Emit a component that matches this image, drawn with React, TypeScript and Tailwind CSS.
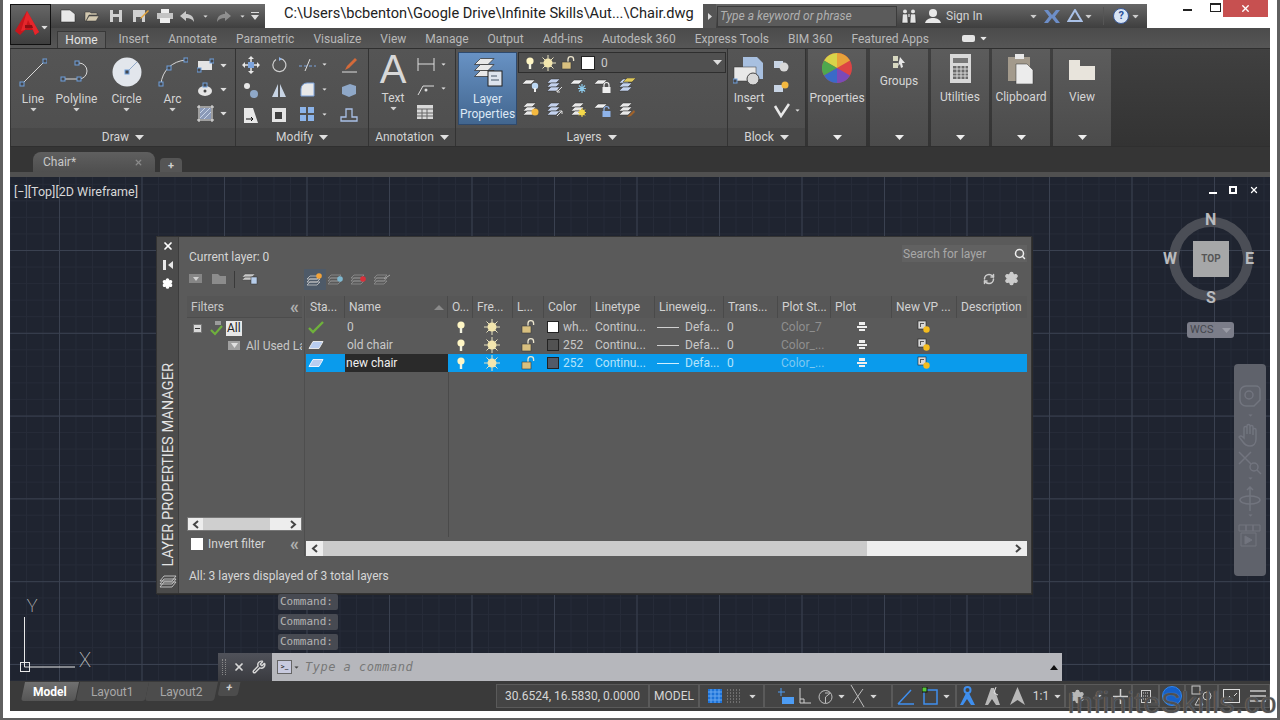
import type { ReactNode } from "react";
import { Search, Settings, RefreshCw, Wrench, X } from "lucide-react";

const rowGrid =
  "grid grid-cols-[39px_103px_25px_40px_31px_47px_64px_69px_54px_53px_61px_65px_70px]";

function Caret({ className = "" }: { className?: string }) {
  return (
    <svg width="9" height="5" viewBox="0 0 9 5" className={className}>
      <path d="M0 0h9L4.500 5z" fill="currentColor" />
    </svg>
  );
}

function Grip({ x, y }: { x: number; y: number }) {
  return <rect x={x - 2} y={y - 2} width="4" height="4" fill="#46484c" stroke="#6f9fdc" />;
}

function Ic({ w = 20, h = 20, children }: { w?: number; h?: number; children: ReactNode }) {
  return (
    <svg width={w} height={h} viewBox={`0 0 ${w} ${h}`} className="shrink-0">
      {children}
    </svg>
  );
}

function Chevron({ left }: { left?: boolean }) {
  return (
    <svg width="7" height="9" viewBox="0 0 7 9">
      <path d={left ? "M6 1L2 4.500 6 8" : "M1 1l4 3.500L1 8"} fill="none" stroke="#444444" strokeWidth="2" />
    </svg>
  );
}

const Sheet = ({ x = 0, y = 0, f = "#eee" }: { x?: number; y?: number; f?: string }) => (
  <path d={`M${x + 4} ${y}h9l-4 4H${x}z`} fill={f} stroke="#333" strokeWidth=".5" />
);

const Stack = ({ c = "#e8e8e8" }: { c?: string }) => (
  <>
    <Sheet x={1} y={1} f={c} />
    <Sheet x={1} y={5} f={c} />
    <Sheet x={1} y={9} f={c} />
  </>
);

const LockBadge = ({ c = "#eeeeee", open }: { c?: string; open?: boolean }) => (
  <>
    <path d={open ? "M10 9V7a2.500 2.500 0 0 1 5 0" : "M10 9V7a2.500 2.500 0 0 1 5 0v2"} fill="none" stroke={c} strokeWidth="1.200" />
    <rect x="8.500" y="9" width="8" height="6" fill={c} />
  </>
);

const layerTools: ReactNode[] = [
  <><Sheet y={2} /><circle cx="13" cy="8" r="3.200" fill="#bcd8f4" /><rect x="12" y="10" width="2" height="4" fill="#eee" /></>,
  <><Stack c="#c4d2ee" /><path d="M16 9l-5 5M11 11v3h3" fill="none" stroke="#dddddd" /></>,
  <><Sheet y={2} /><path d="M12 6v9M8 10.500h8M9 7.500l6 6M15 7.500l-6 6" stroke="#8cc8e8" strokeWidth="1.200" /></>,
  <><Sheet y={2} /><LockBadge /></>,
  <><Stack c="#c4d2ee" /><Sheet x={5} y={0} f="#e0c95a" /></>,
  <><Stack /><circle cx="13" cy="10" r="3.500" fill="#f4b940" /></>,
  <><Stack c="#c4d2ee" /><path d="M11 14l5-5M13 9h3v3" fill="none" stroke="#dddddd" /></>,
  <><Stack /><path d="M12 6v9M8 10.500h8M9 7.500l6 6M15 7.500l-6 6" stroke="#f4d84a" /><circle cx="12" cy="10.500" r="3" fill="#f4d84a" /></>,
  <><Sheet y={2} /><LockBadge c="#8fb4ea" open /></>,
  <><Stack /><path d="M16 8l-5 5-2 2 4-1 4-4z" fill="#a0622a" /></>,
];

function BigTool({ label, icon, w, caret = true, pt = "pt-[7px]", gap = "mt-[4px]" }: { label: ReactNode; icon: ReactNode; w: string; caret?: boolean; pt?: string; gap?: string }) {
  return (
    <div className={`${w} ${pt} flex flex-col items-center text-[12px] leading-[14px] text-[#d4d4d4]`}>
      <div className="h-[32px] flex items-center justify-center">{icon}</div>
      <div className={`${gap} whitespace-nowrap`}>{label}</div>
      {caret && <Caret className="mt-[1px] scale-75 text-[#d0d0d0]" />}
    </div>
  );
}

function Panel({ w, title, children }: { w: string; title: string; children: ReactNode }) {
  return (
    <div className={`${w} shrink-0 flex flex-col bg-gradient-to-b from-[#555555] to-[#4e4e4e] border-r border-[#333333]`}>
      <div className="h-[80px] flex">{children}</div>
      <div className="h-[18px] flex items-center justify-center gap-[6px] bg-[#484848] text-[12px] text-[#d4d4d4]">
        {title}
        <Caret className="text-[#e0e0e0]" />
      </div>
    </div>
  );
}

function SlidePanel({ w, label, icon, top = "pt-[5px]", gap = "mt-[7px]" }: { w: string; label: string; icon: ReactNode; top?: string; gap?: string }) {
  return (
    <div className={`${w} shrink-0 flex flex-col items-center bg-gradient-to-b from-[#5c5c5c] to-[#4b4b4b] ${top} text-[12px] leading-[14px] text-[#d6d6d6]`}>
      {icon}
      <div className={gap}>{label}</div>
      <Caret className="mt-auto mb-[6px] text-[#eeeeee]" />
    </div>
  );
}

function Bulb() {
  return (
    <Ic w={10} h={14}>
      <circle cx="5" cy="5" r="3.600" fill="#fff6c4" />
      <rect x="3.800" y="8" width="2.400" height="5" fill="#f2f2e0" />
    </Ic>
  );
}

function Sun({ s = 16 }: { s?: number }) {
  return (
    <svg width={s} height={s} viewBox="0 0 16 16" className="shrink-0">
      <g stroke="#e9e3c0" strokeWidth="1">
        <path d="M8 0v16M0 8h16M2.500 2.500l11 11M13.500 2.500l-11 11" />
      </g>
      <circle cx="8" cy="8" r="4.500" fill="#f3e6ae" />
    </svg>
  );
}

function Lock() {
  return (
    <Ic w={15} h={14}>
      <path d="M7 6V3.500a2.800 2.800 0 0 1 5.600 0V5" fill="none" stroke="#eee7cf" strokeWidth="1.300" />
      <rect x="1" y="6" width="9" height="7" fill="#d9c07f" stroke="#3a3a3a" strokeWidth=".6" />
    </Ic>
  );
}

function PlotIcon() {
  return (
    <Ic w={10} h={10}>
      <rect x="2" y="0" width="6" height="3" fill="#eee" />
      <rect x="0" y="4" width="10" height="2" fill="#eee" />
      <rect x="2" y="7" width="6" height="2" fill="#eee" />
    </Ic>
  );
}

function VpIcon() {
  return (
    <Ic w={14} h={14}>
      <rect x="1" y="1" width="8" height="8" fill="#d8d8d8" stroke="#222" strokeWidth=".6" />
      <path d="M3 3h4v1H4v3H3z" fill="#555" />
      <circle cx="9.500" cy="9.500" r="3.200" fill="#f4bc1e" />
    </Ic>
  );
}

function LayerRow({ name, color, colorName, plot, active, selected }: { name: string; color: string; colorName: string; plot: string; active?: boolean; selected?: boolean }) {
  const text = selected ? "text-[#b4e3fb]" : "text-[#c9c9c9]";
  return (
    <div className={`${rowGrid} h-[18px] items-center text-[12px] ${text} ${selected ? "bg-[#0a9bec]" : ""}`}>
      <div className="flex pl-[2px]">
        {active ? (
          <svg width="16" height="13" viewBox="0 0 16 13">
            <path d="M1 7l4 4L15 1" fill="none" stroke="#6fb13c" strokeWidth="2.400" />
          </svg>
        ) : (
          <svg width="16" height="8" viewBox="0 0 16 8">
            <path d="M5 .5h10L11 7.500H1z" fill="#b9cdf0" stroke={selected ? "#eaf4ff" : "#e8e8e8"} />
          </svg>
        )}
      </div>
      <div className={`h-full pl-[1px] flex items-center ${selected ? "bg-[#2a2a2a] text-[#f0f0f0]" : "pl-[2px]"}`}>{name}</div>
      <div className="flex justify-center"><Bulb /></div>
      <div className="flex justify-center pr-[3px]"><Sun /></div>
      <div className="flex justify-center"><Lock /></div>
      <div className="flex items-center pl-[3px] gap-[4px]">
        <span className={`w-[12px] h-[12px] border border-[#222222] ${color}`} />
        {colorName}
      </div>
      <div className="truncate pl-[4px]">Continu...</div>
      <div className="flex items-center pl-[2px] gap-[6px]">
        <span className={`w-[22px] h-[1px] ${selected ? "bg-[#d0efff]" : "bg-[#d0d0d0]"}`} />
        Defa...
      </div>
      <div className="pl-[3px]">0</div>
      <div className={`pl-[3px] ${selected ? "text-[#7cc8f2]" : "text-[#8f8f8f]"}`}>{plot}</div>
      <div className="flex justify-center"><PlotIcon /></div>
      <div className="flex justify-center pr-[2px]"><VpIcon /></div>
      <div />
    </div>
  );
}

function HeadCell({ children, className = "" }: { children: ReactNode; className?: string }) {
  return (
    <div className={`h-full flex items-center pl-[4px] bg-[#575757] border-r border-[#4a4a4a] whitespace-nowrap ${className}`}>
      {children}
    </div>
  );
}

function LayerManager() {
  return (
    <div className="absolute left-[146px] top-[59px] w-[876px] h-[358px] flex bg-[#4b4b4b] border border-[#333333] shadow-[1px_1px_0_#2a2a2a] text-[12px] text-[#d6d6d6]">
      <div className="w-[21px] shrink-0 flex flex-col items-center pt-[3px]">
        <X className="w-[12px] h-[12px] text-white" strokeWidth={3.500} />
        <svg width="10" height="10" viewBox="0 0 10 10" className="mt-[8px]">
          <path d="M0 0h3v10H0zM10 1v8L5 5z" fill="#e8e8e8" />
        </svg>
        <Settings className="w-[11px] h-[11px] mt-[8px] text-white" fill="currentColor" strokeWidth={3} />
        <div className="mt-auto mb-[8px] [writing-mode:vertical-rl] rotate-180 text-[14.600px] leading-[16px] whitespace-nowrap text-[#e4e4e4]">
          LAYER PROPERTIES MANAGER
        </div>
        <svg width="18" height="14" viewBox="0 0 18 14" className="mb-[4px]">
          <g fill="none" stroke="#d8d8d8" strokeWidth=".8">
            <path d="M5 1h12l-4 5H1zM5 4h12l-4 5H1zM5 7h12l-4 5H1z" />
          </g>
        </svg>
      </div>
      <div className="flex-1 flex flex-col bg-[#5a5a5a] border-l border-[#3d3d3d] pl-[8px] pr-[4px]">
        <div className="h-[34px] flex items-start justify-between pt-[12px] pl-[2px]">
          <span className="leading-[16px]">Current layer: 0</span>
          <div className="w-[125px] h-[17px] -mt-[4px] bg-[#616161] flex items-center justify-between pl-[1px] pr-[1px] text-[#a8a8a8]">
            Search for layer
            <Search className="w-[12px] h-[12px] text-[#eeeeee]" strokeWidth={3} />
          </div>
        </div>
        <div className="h-[25px] flex items-start">
          <svg width="14" height="11" viewBox="0 0 14 11" className="ml-[2px] mt-[2px]"><path d="M0 1h13v9H0z" fill="#868686" /><path d="M4 4h6L7 8z" fill="#d0d0d0" /></svg>
          <svg width="14" height="11" viewBox="0 0 14 11" className="ml-[9px] mt-[2px]"><path d="M0 1h6l2 2h6v8H0z" fill="#8c8c8c" /></svg>
          <span className="w-[1px] h-[17px] bg-[#3a3a3a] ml-[8px]" />
          <svg width="17" height="14" viewBox="0 0 17 14" className="ml-[6px]"><path d="M4 3h10l-3 3H1zM4 6h10l-3 3H1z" fill="#c8c8c8" stroke="#444" strokeWidth=".4" /><rect x="10" y="6" width="6" height="7" fill="#b7cdea" stroke="#333" strokeWidth=".5" /></svg>
          <div className="ml-[46px] -mt-[2px] w-[22px] h-[21px] bg-[#4e5a68] flex items-center justify-center">
            <svg width="18" height="14" viewBox="0 0 18 14"><g fill="none" stroke="#c8c8c8" strokeWidth=".8"><path d="M4 3h10l-3 3H1zM4 6h10l-3 3H1zM4 9h10l-3 3H1z" /></g><circle cx="13" cy="3" r="2.800" fill="#f2a33a" /></svg>
          </div>
          <svg width="18" height="14" viewBox="0 0 18 14" className="ml-[1px] mt-[1px]">
            <g fill="none" stroke="#909090" strokeWidth=".8"><path d="M4 3h10l-3 3H1zM4 6h10l-3 3H1zM4 9h10l-3 3H1z" /></g>
            <circle cx="13" cy="7" r="2.800" fill="#7fb8d0" />
          </svg>
          <svg width="18" height="14" viewBox="0 0 18 14" className="ml-[5px] mt-[1px]">
            <g fill="none" stroke="#909090" strokeWidth=".8"><path d="M4 3h10l-3 3H1zM4 6h10l-3 3H1zM4 9h10l-3 3H1z" /></g>
            <circle cx="13" cy="7" r="2.800" fill="#d8303a" />
          </svg>
          <svg width="18" height="14" viewBox="0 0 18 14" className="ml-[5px] mt-[1px]">
            <g fill="none" stroke="#909090" strokeWidth=".8"><path d="M4 3h10l-3 3H1zM4 6h10l-3 3H1zM4 9h10l-3 3H1z" /></g>
            <path d="M11 7l6-4" stroke="#a8a8a8" />
          </svg>
          <div className="ml-auto flex items-center gap-[9px] mr-[8px] text-[#cccccc]">
            <RefreshCw className="w-[12px] h-[12px]" strokeWidth={3} />
            <Settings className="w-[15px] h-[15px]" fill="currentColor" strokeWidth={2} />
          </div>
        </div>
        <div className="h-[260px] flex">
          <div className="w-[115px] shrink-0 flex flex-col">
            <div className="h-[22px] flex items-center justify-between pl-[4px] pr-[3px] bg-[#565656] border-b border-[#4c4c4c] text-[#c8c8c8]">
              Filters
              <span className="text-[18px] leading-[15px] font-bold text-[#b0b0b0]">«</span>
            </div>
            <div className="flex-1 relative pt-[1px] pl-[6px]">
              <div className="flex items-center h-[18px]">
                <span className="w-[9px] h-[9px] bg-[#d8d8d8] border border-[#777777] flex items-center justify-center"><span className="w-[5px] h-[1px] bg-[#333333]" /></span>
                <svg width="23" height="16" viewBox="0 0 23 16"><path d="M12 1h8v5h-8z" fill="#5a5a5a" /><path d="M13 2h6M13 4h6" stroke="#ddd" /><path d="M9 10l4 4 7-8" fill="none" stroke="#6fb13c" strokeWidth="2" /></svg>
                <span className="ml-[1px] bg-[#e8e8e8] text-[#222222] px-[1px] leading-[15px]">All</span>
              </div>
              <div className="flex items-center h-[17px] pl-[34px] whitespace-nowrap overflow-hidden text-[#c8c8c8]">
                <svg width="14" height="11" viewBox="0 0 14 11" className="mr-[5px] shrink-0"><path d="M1 1h12v9H1z" fill="#a0a0a0" /><path d="M4 3h7L7.500 8z" fill="#e0e0e0" /></svg>
                All Used Layers
              </div>
            </div>
            <div className="h-[14px] bg-[#ededed] flex items-center border border-[#777777]">
              <span className="w-[15px] flex justify-center"><Chevron left /></span>
              <span className="w-[67px] h-full bg-[#cfcfcf]" />
              <span className="ml-auto w-[15px] flex justify-center"><Chevron /></span>
            </div>
            <div className="h-[25px] flex items-center pl-[4px] pr-[3px] text-[#d6d6d6]">
              <span className="w-[12px] h-[12px] bg-white mr-[5px]" />
              Invert filter
              <span className="ml-auto text-[18px] leading-[15px] font-bold text-[#b0b0b0]">«</span>
            </div>
          </div>
          <div className="w-[3px] shrink-0 mr-[1px] border-r border-[#4e4e4e]" />
          <div className="w-[721px] shrink-0 flex flex-col">
            <div className={`${rowGrid} h-[22px] items-center text-[#d2d2d2]`}>
              <HeadCell>Sta...</HeadCell>
              <HeadCell className="justify-between pr-[3px]">Name<svg width="10" height="5" viewBox="0 0 10 5"><path d="M5 0l5 5H0z" fill="#8a8a8a" /></svg></HeadCell>
              <HeadCell>O...</HeadCell>
              <HeadCell>Fre...</HeadCell>
              <HeadCell>L...</HeadCell>
              <HeadCell>Color</HeadCell>
              <HeadCell>Linetype</HeadCell>
              <HeadCell>Lineweig...</HeadCell>
              <HeadCell>Trans...</HeadCell>
              <HeadCell>Plot St...</HeadCell>
              <HeadCell>Plot</HeadCell>
              <HeadCell>New VP ...</HeadCell>
              <HeadCell className="border-r-0">Description</HeadCell>
            </div>
            <LayerRow name="0" color="bg-white" colorName="wh..." plot="Color_7" active />
            <LayerRow name="old chair" color="bg-[#525252]" colorName="252" plot="Color_..." />
            <LayerRow name="new chair" color="bg-[#525a68]" colorName="252" plot="Color_..." selected />
            <div className="flex-1 relative">
              <span className="absolute left-[142px] top-0 bottom-[4px] w-[1px] bg-[#4a4a4a]" />
            </div>
            <div className="h-[15px] bg-[#eeeeee] flex items-center">
              <span className="w-[17px] flex justify-center"><Chevron left /></span>
              <span className="w-[544px] h-full bg-[#cbcbcb]" />
              <span className="ml-auto w-[17px] flex justify-center"><Chevron /></span>
            </div>
          </div>
        </div>
        <div className="flex-1 flex items-center pl-[2px] pt-[3px]">All: 3 layers displayed of 3 total layers</div>
      </div>
    </div>
  );
}

function CmdLabel() {
  return (
    <div className="w-[60px] h-[16px] rounded-[2px] bg-[#474a52] text-[#b3b3b3] text-[11px] leading-[16px] pl-[2px] font-['DejaVu_Sans_Mono',monospace]">
      Command:
    </div>
  );
}

function ViewCube() {
  return (
    <div className="absolute left-[1155px] top-[36px] w-[92px] h-[92px] text-[#b9bbbe] font-bold text-[16px] leading-[22px]">
      <div className="absolute left-[4px] top-[4px] w-[84px] h-[84px] rounded-full border-[10px] border-[#4b4e56]" />
      <div className="absolute left-[28px] top-[28px] w-[36px] h-[36px] bg-[#a6a7a8] flex items-center justify-center text-[10px] text-[#555555]">TOP</div>
      <span className="absolute left-[40px] -top-[4px]">N</span>
      <span className="absolute left-[41px] top-[74px]">S</span>
      <span className="absolute -left-[2px] top-[35px]">W</span>
      <span className="absolute left-[80px] top-[35px]">E</span>
    </div>
  );
}

function NavBar() {
  return (
    <div className="absolute left-[1224px] top-[187px] w-[32px] h-[212px] rounded-[4px] bg-[#5f626b] flex flex-col items-center pt-[20px] text-[#72757f]">
      <svg width="24" height="28" viewBox="0 0 24 28" fill="none" stroke="currentColor" strokeWidth="1.500"><path d="M8 2h10a4 4 0 0 1 4 4v10l-6 6H8a6 6 0 0 1-6-6V8a6 6 0 0 1 6-6z" /><circle cx="11" cy="11" r="4" /></svg>
      <Caret className="scale-50 mt-[1px]" />
      <svg width="24" height="24" viewBox="0 0 24 24" fill="none" stroke="currentColor" strokeWidth="1.500" className="mt-[5px]"><path d="M6 13V5a1.500 1.500 0 0 1 3 0v6-8a1.500 1.500 0 0 1 3 0v8-7a1.500 1.500 0 0 1 3 0v8-5a1.500 1.500 0 0 1 3 0v9c0 5-3 7-6 7s-5-1-7-4l-4-5c1-2 3-1 5 1z" /></svg>
      <svg width="24" height="24" viewBox="0 0 24 24" fill="none" stroke="currentColor" strokeWidth="1.500" className="mt-[4px]"><path d="M1 1l12 12M13 1L1 13" /><circle cx="16" cy="16" r="4" /><path d="M19 19l4 4" /></svg>
      <Caret className="scale-50 mt-[1px]" />
      <svg width="24" height="26" viewBox="0 0 24 26" fill="none" stroke="currentColor" strokeWidth="1.500" className="mt-[5px]"><path d="M12 1v24M9 4l3-3 3 3" /><ellipse cx="12" cy="14" rx="10" ry="4" /></svg>
      <Caret className="scale-50 mt-[1px]" />
      <svg width="24" height="24" viewBox="0 0 24 24" fill="none" stroke="currentColor" className="mt-[6px]"><path d="M1 1h7v6H1zM8 1h7v6H8zM15 1h7v6h-7zM3 9h15v13H3z" /><path d="M7 12l7 4-7 4z" fill="currentColor" /></svg>
    </div>
  );
}

function UcsIcon() {
  return (
    <svg width="95" height="86" viewBox="0 0 95 86" className="absolute -left-[2px] top-[417px]">
      <g fill="none" stroke="#e8e8e8" strokeWidth="1">
        <path d="M16.500 23V73H67" />
        <rect x="12.500" y="68.500" width="9" height="9" />
      </g>
      <text x="24" y="18" textAnchor="middle" fontSize="18" fontWeight="100" fill="#e8e8e8" fontFamily="Roboto, sans-serif">Y</text>
      <text x="77" y="73" textAnchor="middle" fontSize="20" fontWeight="100" fill="#e8e8e8" fontFamily="Roboto, sans-serif">X</text>
    </svg>
  );
}

function StatusCell({ w, children }: { w: string; children: ReactNode }) {
  return (
    <div className={`${w} shrink-0 h-full flex items-center justify-center gap-[4px] border border-[#5a5a5a] bg-[#444444] overflow-hidden`}>
      {children}
    </div>
  );
}

function Layout({ label, active }: { label: string; active?: boolean }) {
  return (
    <div className={`h-[19px] flex items-center -skew-x-12 rounded-b-[3px] text-[12px] ${active ? "px-[10px] bg-gradient-to-b from-[#707070] to-[#555555] text-white font-bold" : "px-[13px] bg-[#4c4c4c] text-[#a8a8a8]"}`}>
      <span className="skew-x-12">{label}</span>
    </div>
  );
}

function AppButton() {
  return (
    <div className="absolute left-[7px] top-[4px] w-[41px] h-[41px] flex items-center justify-center bg-gradient-to-b from-[#666666] to-[#3e3e3e] border border-[#111111] text-[#dddddd]">
      <svg width="26" height="28" viewBox="0 0 26 26" className="-ml-[7px] -mt-[3px]">
        <path d="M13 1L1 21l5 4 5-5h8l2 5 4-3z" fill="#c8151b" />
        <path d="M13 1L7 21l4-1 3-10 5 10 2 5 4-3z" fill="#e5262b" />
        <path d="M11 15h7l1 3h-8z" fill="#8d0f13" />
      </svg>
      <Caret className="absolute right-[1px] top-[20px] scale-75" />
    </div>
  );
}

export default function App() {
  return (
    <div className="relative w-[1280px] h-[720px] overflow-hidden bg-white border-l-[3px] border-r-[3px] border-b-[2px] border-[#5f5f5f] font-['Roboto',sans-serif]">
      <AppButton />
      {/* title row */}
      <div className="h-[28px] flex items-end pl-[7px] pr-[7px]">
        <div className="w-[255px] h-[24px] pl-[50px] flex items-center bg-gradient-to-b from-[#6c6c6c] to-[#3f3f3f] text-[#d8d8d8]">
          <svg width="16" height="14" viewBox="0 0 16 14"><path d="M1 1h9l5 4v8H1z" fill="#e8e8e8" stroke="#222" strokeWidth=".5" /></svg>
          <svg width="16" height="12" viewBox="0 0 16 12" className="ml-[8px]"><path d="M1 2h5l1 1h6v2H5l-3 6H1zM5 6h10l-3 5H2z" fill="#d2c8b0" stroke="#333" strokeWidth=".5" /></svg>
          <svg width="12" height="14" viewBox="0 0 12 14" className="ml-[10px]"><path d="M0 1h12v12H0z" fill="#d0d0d0" /><path d="M3 1h6v4H3zM3 8h6v5H3z" fill="#555" /></svg>
          <svg width="16" height="14" viewBox="0 0 16 14" className="ml-[11px]"><path d="M0 1h12v12H0z" fill="#d0d0d0" /><path d="M3 8h6v5H3z" fill="#555" /><path d="M15 1L8 8l-1 2 2-1 7-7z" fill="#e6a63c" /></svg>
          <svg width="16" height="14" viewBox="0 0 16 14" className="ml-[8px]"><path d="M4 0h8v4H4z" fill="#eee" /><path d="M0 4h16v6H0z" fill="#c4c4c4" /><path d="M3 9h10v5H3z" fill="#eee" /></svg>
          <svg width="14" height="11" viewBox="0 0 14 11" className="ml-[7px]"><path d="M0 5l6-5v3c4 0 8 2 8 8-2-3-4-4-8-4v3z" fill="#c8c8c8" /></svg>
          <Caret className="scale-50 ml-[6.500px]" />
          <svg width="14" height="11" viewBox="0 0 14 11" className="ml-[7.500px] opacity-50"><path d="M14 5L8 0v3C4 3 0 5 0 11c2-3 4-4 8-4v3z" fill="#c8c8c8" /></svg>
          <Caret className="scale-50 ml-[6.500px]" />
          <svg width="8" height="8" viewBox="0 0 8 8" className="ml-[4.500px]"><path d="M0 0h8v1H0zM0 3h8L4 8z" fill="#ddd" /></svg>
        </div>
        <div className="w-[438px] h-[28px] pl-[19px] flex items-center text-[14.600px] text-[#222222] whitespace-nowrap">
          C:\Users\bcbenton\Google Drive\Infinite Skills\Aut...\Chair.dwg
        </div>
        <div className="w-[444px] h-[24px] flex items-center bg-gradient-to-b from-[#676767] to-[#3f3f3f]">
          <div className="w-[13px] h-full flex items-center justify-center bg-[#555555]">
            <svg width="4" height="7" viewBox="0 0 4 7"><path d="M0 0l4 3.500L0 7z" fill="#ddd" /></svg>
          </div>
          <div className="w-[180px] h-[21px] ml-[1px] pl-[2px] bg-[#5b5b5b] border border-[#3c3c3c] text-[12px] leading-[19px] italic text-[#b0b0b0]">Type a keyword or phrase</div>
          <svg width="16" height="15" viewBox="0 0 16 15" className="ml-[4px]">
            <circle cx="4" cy="2.500" r="2" fill="#e4e4e4" /><circle cx="12" cy="2.500" r="2" fill="#e4e4e4" />
            <path d="M1.500 5h5l.5 9H1zM9.500 5h5l.5 9H9z" fill="#e4e4e4" stroke="#222" strokeWidth=".5" />
            <rect x="7" y="5" width="2" height="3" fill="#aaa" />
          </svg>
          <svg width="16" height="16" viewBox="0 0 16 16" className="ml-[8px]"><circle cx="8" cy="5" r="4" fill="#e8e8e8" /><path d="M0 15c1-4 5-5 8-5s7 1 8 5z" fill="#e8e8e8" /></svg>
          <span className="ml-[5px] text-[12px] text-[#d4d4d4]">Sign In</span>
          <Caret className="ml-[47px] scale-75 text-[#cccccc]" />
          <svg width="16" height="13" viewBox="0 0 16 13" className="ml-[6px]"><path d="M0 0h4l4 5 4-5h4l-5 6.500 5 6.500h-4L8 8l-4 5H0l5-6.500z" fill="#6d8ec8" /></svg>
          <svg width="16" height="14" viewBox="0 0 16 14" className="ml-[7px]"><path d="M8 1l6.500 11h-13z" fill="none" stroke="#a9c0e6" strokeWidth="2" /></svg>
          <Caret className="ml-[1px] scale-75 text-[#cccccc]" />
          <span className="w-[1px] h-[18px] bg-[#555555] ml-[10px]" />
          <span className="ml-[9px] w-[16px] h-[16px] rounded-full bg-[#d8e4f4] border border-[#3a5a9a] text-[11px] leading-[14px] text-center font-bold text-[#28509a]">?</span>
          <Caret className="ml-[2px] scale-75 text-[#cccccc]" />
        </div>
        <div className="relative flex-1 h-[28px]">
          <span className="absolute left-[36px] top-[9px] w-[9px] h-[2px] bg-[#222222]" />
          <span className="absolute left-[63px] top-[3px] w-[11px] h-[9px] border border-[#222222] border-t-2" />
          <div className="absolute right-[2px] top-0 w-[45px] h-[17px] bg-[#c75050] flex items-center justify-center">
            <X className="w-[11px] h-[11px] text-white" strokeWidth={3} />
          </div>
        </div>
      </div>

      {/* app body */}
      <div className="ml-[7px] mr-[7px] flex flex-col h-[683px] bg-[#3a3a3a]">
        {/* ribbon tabs */}
        <div className="h-[20px] pl-[47px] flex items-end bg-gradient-to-b from-[#4b4b4b] to-[#565656] text-[12px] text-[#b9b9b9] whitespace-nowrap">
          <div className="w-[49px] h-[17px] mr-[3px] flex items-center justify-center bg-[#5c5c5c] text-[#e4e4e4] border-x border-t border-[#383838]">Home</div>
          {["Insert", "Annotate", "Parametric", "Visualize", "View", "Manage", "Output", "Add-ins", "Autodesk 360", "Express Tools", "BIM 360", "Featured Apps"].map((t) => (
            <div key={t} className="h-[20px] px-[9.500px] pt-[2px] flex items-center">{t}</div>
          ))}
          <div className="ml-[23px] h-[20px] flex items-center gap-[4px] text-[#e8e8e8]">
            <span className="w-[13px] h-[7px] rounded-[2px] bg-[#e4e4e4]" />
            <Caret className="scale-75" />
          </div>
        </div>
        {/* ribbon */}
        <div className="h-[99px] flex items-stretch border-y border-[#2f2f2f] bg-gradient-to-b from-[#404040] to-[#333333] pl-[1px]">
          <Panel w="w-[225px]" title="Draw">
            <BigTool w="w-[44px]" label="Line" icon={<Ic w={28} h={30}><path d="M3 27L26 4" stroke="#d8d8d8" /><Grip x={3} y={27} /><Grip x={26} y={4} /></Ic>} />
            <BigTool w="w-[43px]" label="Polyline" icon={<Ic w={34} h={26}><path d="M3 20h16a8 8 0 0 0 0-16h-2" fill="none" stroke="#d8d8d8" /><Grip x={3} y={20} /><Grip x={19} y={20} /><Grip x={17} y={4} /></Ic>} />
            <BigTool w="w-[57px]" label="Circle" icon={<Ic w={30} h={30}><circle cx="15" cy="15" r="14.500" fill="#e2e6ec" /><path d="M15 15L25 5" stroke="#8fa8c8" /><Grip x={15} y={15} /></Ic>} />
            <BigTool w="w-[35px]" label="Arc" icon={<Ic w={30} h={30}><path d="M3 27C4 14 14 4 28 3" fill="none" stroke="#d8d8d8" /><Grip x={3} y={27} /><Grip x={11} y={11} /><Grip x={28} y={3} /></Ic>} />
            <div className="flex-1 flex flex-col items-center pt-[8px] gap-[7px] pr-[1px] text-[#dddddd]">
              <div className="flex items-center gap-[5px]"><Ic w={17} h={17}><rect x="1" y="4" width="14" height="9" fill="#e4e4e4" /><Grip x={2} y={13} /><Grip x={15} y={4} /></Ic><Caret className="scale-75" /></div>
              <div className="flex items-center gap-[5px]"><Ic w={17} h={17}><ellipse cx="8" cy="10" rx="7" ry="5" fill="#e4e4e4" /><circle cx="8" cy="10" r="1.500" fill="#444" /><Grip x={8} y={4} /></Ic><Caret className="scale-75" /></div>
              <div className="flex items-center gap-[5px]"><Ic w={17} h={17}><path d="M2 0v17M15 0v17M0 2h17M0 15h17" stroke="#eeeeee" /><rect x="3" y="3" width="11" height="11" fill="#8b9ab8" /><path d="M3 8l5-5M3 13L13 3M7 14l7-7" stroke="#c8d4e8" /></Ic><Caret className="scale-75" /></div>
            </div>
          </Panel>
          <Panel w="w-[133px]" title="Modify">
            <div className="grid grid-cols-[28px_28px_42px_28px] grid-rows-3 pl-[1px] pt-[3px] h-[78px] place-items-center text-[#dddddd]">
              <Ic w={18} h={18}><path d="M9 1v16M1 9h16" stroke="#e8e8e8" strokeWidth="1.500" /><path d="M9 0l3 3H6zM9 18l3-3H6zM0 9l3-3v6zM18 9l-3-3v6z" fill="#e8e8e8" /><rect x="6" y="6" width="6" height="6" fill="#7ca3dc" /></Ic>
              <Ic w={16} h={16}><path d="M5 2.500A6.500 6.500 0 1 0 9 1.600" fill="none" stroke="#cfcfcf" strokeWidth="1.200" /><path d="M8 0l3 2-3 2z" fill="#8fb4ea" /></Ic>
              <div className="flex items-center gap-[4px]"><Ic w={17} h={14}><path d="M0 8h17" stroke="#7ca3dc" strokeDasharray="3 2" /><path d="M11 1L6 13" stroke="#ddd" /></Ic><Caret className="scale-50" /></div>
              <Ic w={18} h={18}><path d="M2 16h15" stroke="#ddd" /><path d="M15 2L7 10l-2 4 4-2 8-8z" fill="#d46a3a" /></Ic>
              <Ic w={18} h={18}><circle cx="5" cy="5" r="3" fill="#e8e8e8" /><circle cx="12" cy="13" r="4" fill="#8fa8c8" /></Ic>
              <Ic w={16} h={16}><path d="M7 2v13H1zM9 2v13h6z" fill="#c8d4e4" /></Ic>
              <div className="flex items-center gap-[4px]"><Ic w={17} h={17}><path d="M2 15V8a6 6 0 0 1 6-6h7v13z" fill="#e8e8e8" stroke="#7ca3dc" /></Ic><Caret className="scale-50" /></div>
              <Ic w={18} h={16}><path d="M2 5l8-3 6 2v8l-7 3-7-3z" fill="#8fa8c8" /></Ic>
              <Ic w={16} h={18}><path d="M1 2h9l5 15H1z" fill="#e8e8e8" /><path d="M3 13h7M8 11l2 2-2 2" stroke="#111" fill="none" /></Ic>
              <Ic w={16} h={16}><path d="M1 1h14v14H1z" fill="#e4e4e4" /><path d="M4 5h7v7H4z" fill="#3f3f3f" /></Ic>
              <div className="flex items-center gap-[4px]"><Ic w={17} h={17}><path d="M1 1h6v6H1zM9 1h6v6H9zM1 9h6v6H1zM9 9h6v6H9z" fill="#8cb4ea" /></Ic><Caret className="scale-50" /></div>
              <Ic w={18} h={16}><path d="M1 14v-4h5V2h6v8h5v4z" fill="none" stroke="#a9c0e6" strokeWidth="1.300" /></Ic>
            </div>
          </Panel>
          <Panel w="w-[87px]" title="Annotation">
            <BigTool w="w-[48px]" label="Text" pt="pt-[4px]" gap="mt-[6px]" icon={<span className="text-[40px] leading-[36px] text-[#d8d8d8] font-['Liberation_Sans',sans-serif]">A</span>} />
            <div className="flex-1 flex flex-col pt-[8px] gap-[9px] text-[#dddddd]">
              <div className="flex items-center gap-[4px]"><Ic w={18} h={15}><path d="M1 1v13M17 1v13M1 7h16" stroke="#dddddd" /></Ic><Caret className="scale-50" /></div>
              <div className="flex items-center gap-[4px]"><Ic w={18} h={15}><path d="M1 14l5-9h11" stroke="#dddddd" fill="none" /><circle cx="9" cy="9" r="1.500" fill="#ddd" /></Ic><Caret className="scale-50" /></div>
              <Ic w={16} h={14}><path d="M0 0h16v14H0z" fill="#d8d8d8" /><path d="M0 4h16M0 8h16M0 11h16M5 4v10M10 4v10" stroke="#666" /></Ic>
            </div>
          </Panel>
          <Panel w="w-[272px]" title="Layers">
            <div className="w-[59px] h-[73px] ml-[2px] mt-[3px] flex flex-col items-center pt-[4px] bg-gradient-to-b from-[#6892c4] to-[#42668f] border border-[#2f4a6d] text-[12px] leading-[15px] text-[#dde8f4]">
              <Ic w={34} h={30}><g transform="translate(2 0) scale(1.500)"><Stack /></g><rect x="17" y="14" width="14" height="15" fill="#dde4ee" stroke="#222" /><path d="M20 19h6M20 23h8" stroke="#456" /></Ic>
              <div className="mt-[5px]">Layer</div>
              <div>Properties</div>
            </div>
            <div className="flex-1 flex flex-col pl-[1px] pt-[3px]">
              <div className="w-[208px] h-[21px] flex items-center pl-[6px] gap-[5px] bg-[#505050] border border-[#2e2e2e] text-[12px] text-[#cccccc]">
                <Bulb />
                <Sun />
                <Lock />
                <span className="w-[14px] h-[14px] bg-white border border-[#222222]" />
                <span className="ml-[1px]">0</span>
                <Caret className="ml-auto mr-[3px] text-[#dddddd]" />
              </div>
              <div className="grid grid-cols-[24px_24px_24px_24px_24px] grid-rows-2 gap-y-[8px] pl-[4px] pt-[5px]">
                {layerTools.map((node, i) => (
                  <Ic key={i} w={18} h={16}>{node}</Ic>
                ))}
              </div>
            </div>
          </Panel>
          <Panel w="w-[78px]" title="Block">
            <BigTool w="w-[42px]" label="Insert" pt="pt-[6px]" gap="mt-[4px]" icon={<Ic w={32} h={32}><path d="M10 2h14l6 6v16H10z" fill="#a8c0e0" /><rect x="1" y="12" width="22" height="14" fill="#e8e8e8" stroke="#333" strokeWidth=".5" /><circle cx="20" cy="24" r="6" fill="#d8d8d8" stroke="#444" /><Grip x={2} y={26} /></Ic>} />
            <div className="flex-1 flex flex-col items-start pt-[9px] gap-[7px] pl-[3px] text-[#dddddd]">
              <Ic w={17} h={15}><rect x="1" y="3" width="9" height="7" fill="#c8d4e4" /><circle cx="11" cy="9" r="4.500" fill="#d8d8d8" /></Ic>
              <Ic w={17} h={16}><rect x="1" y="5" width="9" height="7" fill="#c8d4e4" /><circle cx="12" cy="5" r="3.500" fill="#f4b940" /></Ic>
              <div className="flex items-center gap-[3px]"><Ic w={17} h={15}><path d="M2 3l6 10 8-12" fill="none" stroke="#e8e8e8" strokeWidth="2.500" /></Ic><Caret className="scale-50" /></div>
            </div>
          </Panel>
          <div className="w-[2px] shrink-0" />
          <SlidePanel w="w-[58px] mr-[4px]" label="Properties" top="pt-[4px]" gap="mt-[8px]" icon={<svg width="30" height="30" viewBox="0 0 30 30"><circle cx="15" cy="15" r="15" fill="#d44" /><path d="M15 15L15 0A15 15 0 0 1 28 7.500z" fill="#e8a23a" /><path d="M15 15L15 0A15 15 0 0 0 2 7.500z" fill="#d8d44a" /><path d="M15 15L2 7.500A15 15 0 0 0 2 22.500z" fill="#4ea84e" /><path d="M15 15L2 22.500A15 15 0 0 0 15 30z" fill="#3a6ac8" /><path d="M15 15V30A15 15 0 0 0 28 22.500z" fill="#7a4ab8" /></svg>} />
          <SlidePanel w="w-[58px] mr-[3px]" label="Groups" gap="mt-[4px]" icon={<svg width="14" height="16" viewBox="0 0 14 16"><path d="M1 2h5v5H1zM1 9h5v5H1z" fill="#d8d8c0" /><path d="M8 3l5 6-3 0 1 4-2 1-1-4-2 2z" fill="#e8e8e8" /></svg>} />
          <SlidePanel w="w-[58px] mr-[3px]" label="Utilities" icon={<svg width="21" height="29" viewBox="0 0 21 29"><rect width="21" height="29" fill="#d8d8d8" /><rect x="3" y="4" width="15" height="5" fill="#777" /><path d="M3 12h15v13H3z" fill="#6a6a6a" /><path d="M3 15h15M3 19h15M3 22h15M7 12v13M11 12v13M15 12v13" stroke="#d8d8d8" /></svg>} />
          <SlidePanel w="w-[58px] mr-[3px]" label="Clipboard" gap="mt-[6px]" icon={<svg width="26" height="30" viewBox="0 0 26 30"><rect y="3" width="22" height="24" fill="#a39a8c" /><rect x="7" y="0" width="9" height="5" fill="#e8e8e8" /><path d="M8 10h11l6 6v14H8z" fill="#ececec" stroke="#333" strokeWidth=".5" /></svg>} />
          <SlidePanel w="w-[58px]" label="View" top="pt-[11px]" gap="mt-[10px]" icon={<svg width="26" height="20" viewBox="0 0 26 20"><path d="M0 0h11v6h15v14H0z" fill="#e8e4dc" /></svg>} />
        </div>
        {/* file tabs */}
        <div className="h-[25px] pl-[23px] flex items-end gap-[5px] bg-[#353535]">
          <div className="w-[122px] h-[20px] pl-[10px] pr-[12px] flex items-center justify-between rounded-t-[8px] bg-gradient-to-b from-[#5f5f5f] to-[#4f4f4f] text-[12px] text-[#c8c8c8]">
            Chair*
            <X className="w-[9px] h-[9px] text-[#8a8a8a]" strokeWidth={3.500} />
          </div>
          <div className="w-[22px] h-[14px] flex items-center justify-center rounded-t-[4px] bg-[#555555] text-[11px] leading-[11px] font-bold text-[#cfcfcf]">+</div>
        </div>
        <div className="h-[5px] bg-[#505050]" />
        {/* drawing area */}
        <div className="relative h-[504px] bg-[#1f2430] bg-[linear-gradient(#3a4150_1px,transparent_1px),linear-gradient(90deg,#3a4150_1px,transparent_1px),linear-gradient(#262b38_1px,transparent_1px),linear-gradient(90deg,#262b38_1px,transparent_1px)] bg-[size:82.5px_82.8px,82.5px_82.8px,16.5px_16.56px,16.5px_16.56px] bg-[position:49px_73px,49px_73px,49px_73px,49px_73px]">
          <div className="absolute left-[4px] top-[6px] text-[12.500px] text-[#d8d8d8]">[−][Top][2D Wireframe]</div>
          <div className="absolute right-[11px] top-[8px] flex items-center gap-[12px]">
            <span className="w-[8px] h-[2px] mt-[5px] bg-white" />
            <span className="w-[8px] h-[8px] border-2 border-white" />
            <X className="w-[10px] h-[10px] text-white" strokeWidth={3} />
          </div>
          <ViewCube />
          <div className="absolute left-[1177px] top-[145px] w-[47px] h-[16px] rounded-[3px] bg-[#7b7d89] flex items-center justify-between pl-[3px] pr-[3px] text-[11px] text-[#44464d]">
            WCS
            <Caret className="text-[#9a9ca6]" />
          </div>
          <NavBar />
          <UcsIcon />
          <LayerManager />
          <div className="absolute left-[268px] top-[417px] flex flex-col gap-[4px]">
            <CmdLabel />
            <CmdLabel />
            <CmdLabel />
          </div>
          <div className="absolute left-[208px] top-[476px] w-[844px] h-[28px] flex">
            <div className="w-[54px] flex items-center gap-[7px] pl-[4px] bg-gradient-to-b from-[#50525a] to-[#3a3b40] text-[#d8d8d8]">
              <span className="w-[4px] h-[16px] border-x border-dotted border-[#888888]" />
              <X className="w-[12px] h-[12px]" strokeWidth={3.500} />
              <Wrench className="w-[14px] h-[14px]" strokeWidth={2.500} />
            </div>
            <div className="flex-1 flex items-center pl-[5px] bg-[#b6b7bc]">
              <span className="w-[15px] h-[14px] bg-[#c8cade] border border-[#666666] text-[8px] leading-[12px] text-center text-[#222222]">&gt;_</span>
              <Caret className="scale-50 text-[#444444]" />
              <span className="ml-[4px] text-[12px] italic tracking-[0.5px] text-[#777777] font-['DejaVu_Sans_Mono',monospace]">Type a command</span>
              <svg width="8" height="5" viewBox="0 0 8 5" className="ml-auto mr-[4px]"><path d="M4 0l4 5H0z" fill="#111" /></svg>
            </div>
          </div>
        </div>
        {/* status bar */}
        <div className="h-[30px] flex bg-[#3a3a3a] pl-[13px]">
          <div className="flex items-start gap-[1px] h-[20px] pt-[1px]">
            <Layout label="Model" active />
            <Layout label="Layout1" />
            <Layout label="Layout2" />
            <div className="h-[14px] w-[20px] ml-[2px] -skew-x-12 rounded-b-[3px] bg-[#4c4c4c] text-[11px] leading-[12px] text-center font-bold text-[#cfcfcf]">+</div>
          </div>
          <div className="ml-auto mt-[3px] h-[24px] flex text-[12px] text-[#d6d6d6] whitespace-nowrap">
            <StatusCell w="w-[153px]">30.6524, 16.5830, 0.0000</StatusCell>
            <StatusCell w="w-[50px]">MODEL</StatusCell>
            <StatusCell w="w-[65px]">
              <svg width="16" height="16" viewBox="0 0 16 16"><path d="M1 1h14v14H1z" fill="#1c72d8" /><path d="M4 1v14M8 1v14M12 1v14M1 4h14M1 8h14M1 12h14" stroke="#69a8f0" /></svg>
              <svg width="15" height="15" viewBox="0 0 15 15"><path d="M0 1h15M0 4h15M0 7h15M0 10h15M0 13h15" stroke="#9a9a9a" strokeDasharray="1 2" /></svg>
              <Caret className="scale-75 ml-[2px]" />
            </StatusCell>
            <StatusCell w="w-[128px]">
              <svg width="17" height="18" viewBox="0 0 17 18"><path d="M3 1v8M0 5h7" stroke="#4d9cf4" /><rect x="4" y="10" width="12" height="7" fill="#4d9cf4" /></svg>
              <svg width="13" height="16" viewBox="0 0 13 16"><path d="M1 0v15h11M1 11h4v4" fill="none" stroke="#cfcfcf" /></svg>
              <svg width="15" height="15" viewBox="0 0 15 15" className="ml-[2px]"><circle cx="7.500" cy="8" r="6.500" fill="none" stroke="#bdbdbd" /><path d="M7.500 8l5-4M7.500 8v6M7 4h5" stroke="#bdbdbd" /></svg>
              <Caret className="scale-75" />
              <svg width="15" height="24" viewBox="0 0 15 24"><path d="M1 1l13 22M13 5L3 19" stroke="#bdbdbd" /></svg>
              <Caret className="scale-75" />
            </StatusCell>
            <StatusCell w="w-[64px]">
              <svg width="18" height="17" viewBox="0 0 18 17"><path d="M1 16h16M1 16L14 2" stroke="#3f8fee" strokeWidth="1.500" fill="none" /></svg>
              <svg width="16" height="18" viewBox="0 0 16 18" className="ml-[3px]"><rect x="2" y="3" width="13" height="14" fill="none" stroke="#3f8fee" strokeWidth="1.500" /><rect x="0" y="0" width="5" height="5" fill="#58c83a" stroke="#111" /></svg>
              <Caret className="scale-75" />
            </StatusCell>
            <StatusCell w="w-[109px]">
              <svg width="17" height="20" viewBox="0 0 17 20"><circle cx="8.500" cy="4" r="3" fill="none" stroke="#3f8fee" strokeWidth="2" /><path d="M7 7L1 19h3l4-6 4 6h4L10 7z" fill="#3f8fee" /></svg>
              <svg width="17" height="20" viewBox="0 0 17 20" className="ml-[4px]"><path d="M7 2L1 19h3l4-6 4 6h4L10 2z" fill="#b8b8b8" /><path d="M12 1l-2 6 4 2" fill="none" stroke="#ddd" /></svg>
              <svg width="17" height="20" viewBox="0 0 17 20" className="ml-[4px]"><path d="M8.500 1L1 19l7.500-5 7.500 5z" fill="#b8b8b8" /></svg>
              <span className="ml-[3px] text-[12px]">1:1</span>
              <Caret className="scale-75" />
            </StatusCell>
            <StatusCell w="w-[67px]">
              <Settings className="w-[15px] h-[15px] text-[#b8b8b8]" fill="currentColor" strokeWidth={2} />
              <Caret className="scale-75 ml-[5px] text-[#cccccc]" />
              <svg width="15" height="15" viewBox="0 0 15 15" className="ml-[6px]"><path d="M7.500 0v15M0 7.500h15" stroke="#d0d0d0" strokeWidth="1.500" /></svg>
            </StatusCell>
            <StatusCell w="w-[27px]">
              <svg width="10" height="13" viewBox="0 0 10 13"><rect x=".5" y=".5" width="9" height="12" fill="none" stroke="#cfcfcf" /><path d="M2 3h6M2 6h6M2 9h6" stroke="#cfcfcf" strokeDasharray="1 1" /></svg>
            </StatusCell>
            <StatusCell w="w-[26px]">
              <span className="w-[20px] h-[20px] rounded-full bg-[#1660c8] border border-[#2f86f0]" />
            </StatusCell>
            <StatusCell w="w-[33px]">
              <svg width="22" height="22" viewBox="0 0 22 22" fill="none" stroke="#c8c8c8"><rect x="1" y="1" width="8" height="8" /><circle cx="16" cy="11" r="4" /><path d="M8 13l4 7H4z" /></svg>
            </StatusCell>
            <StatusCell w="w-[52px]">
              <svg width="17" height="14" viewBox="0 0 17 14" fill="none" stroke="#dddddd"><rect x=".5" y=".5" width="16" height="13" /><path d="M4 10l3-3M11 7l3-3" /></svg>
              <svg width="16" height="12" viewBox="0 0 16 12" className="ml-[6px]"><path d="M0 1h16M0 6h16M0 11h16" stroke="#c8c8c8" strokeWidth="1.500" /></svg>
            </StatusCell>
          </div>
        </div>
      </div>
      <div className="absolute left-[1064px] top-[689px] text-[30px] leading-[28px] tracking-[0.7px] whitespace-nowrap text-[#3a3a3a]/75 [text-shadow:0_0_1px_#9a9a9a] font-['Liberation_Sans',sans-serif]">
        InfiniteSkills.com
      </div>
    </div>
  );
}
